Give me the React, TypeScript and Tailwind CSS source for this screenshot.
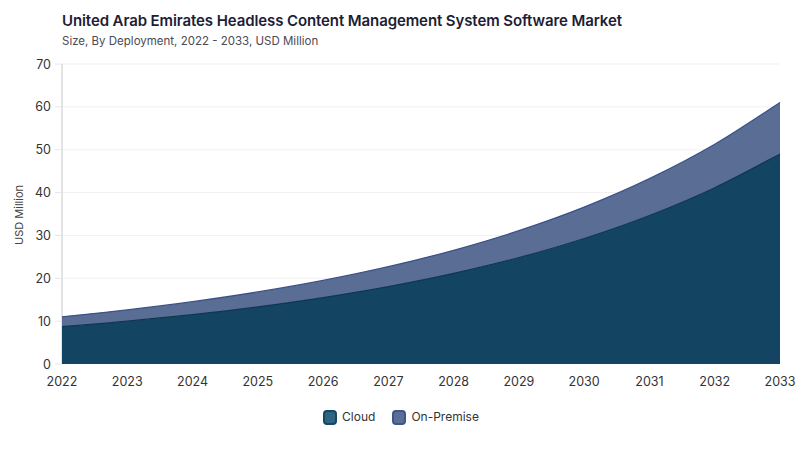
import React from 'react';

const years = [2022, 2023, 2024, 2025, 2026, 2027, 2028, 2029, 2030, 2031, 2032, 2033];
const cloud = [8.7, 9.99, 11.53, 13.34, 15.5, 18.07, 21.15, 24.84, 29.29, 34.65, 41.14, 49.0];
const total = [11.0, 12.63, 14.54, 16.81, 19.5, 22.7, 26.53, 31.11, 36.61, 43.25, 51.27, 61.0];

const X0 = 62;
const X1 = 780;
const Y0 = 371;
const YTOP = 71;
const xAt = (i: number) => X0 + ((X1 - X0) * i) / (years.length - 1);
const yAt = (v: number) => Y0 - ((Y0 - YTOP) * v) / 70;

// catmull-rom through the points, returned as bezier segments
function smooth(vals: number[]) {
  const pts = vals.map((v, i) => [xAt(i), yAt(v)]);
  let d = `M${pts[0][0]},${pts[0][1]}`;
  for (let i = 0; i < pts.length - 1; i++) {
    const p0 = pts[i - 1] || pts[i];
    const p1 = pts[i];
    const p2 = pts[i + 1];
    const p3 = pts[i + 2] || p2;
    const c1x = p1[0] + (p2[0] - p0[0]) / 6;
    const c1y = p1[1] + (p2[1] - p0[1]) / 6;
    const c2x = p2[0] - (p3[0] - p1[0]) / 6;
    const c2y = p2[1] - (p3[1] - p1[1]) / 6;
    d += ` C${c1x},${c1y} ${c2x},${c2y} ${p2[0]},${p2[1]}`;
  }
  return d;
}

function reversePath(vals: number[]) {
  const rev = [...vals].reverse();
  const pts = rev.map((v, k) => [xAt(vals.length - 1 - k), yAt(v)]);
  let d = '';
  for (let i = 0; i < pts.length - 1; i++) {
    const p0 = pts[i - 1] || pts[i];
    const p1 = pts[i];
    const p2 = pts[i + 1];
    const p3 = pts[i + 2] || p2;
    const c1x = p1[0] + (p2[0] - p0[0]) / 6;
    const c1y = p1[1] + (p2[1] - p0[1]) / 6;
    const c2x = p2[0] - (p3[0] - p1[0]) / 6;
    const c2y = p2[1] - (p3[1] - p1[1]) / 6;
    d += ` C${c1x},${c1y} ${c2x},${c2y} ${p2[0]},${p2[1]}`;
  }
  return d;
}

export default function App() {
  const topLine = smooth(total);
  const cloudLine = smooth(cloud);
  const premArea = `${topLine} L${xAt(11)},${yAt(cloud[11])}${reversePath(cloud)} Z`;
  const cloudArea = `${cloudLine} L${X1},${Y0} L${X0},${Y0} Z`;

  return (
    <div className="w-[800px] h-[450px] bg-white overflow-hidden" style={{ fontFamily: 'Inter, "Noto Sans", sans-serif' }}>
      <div className="pl-[62px] pt-[11px]">
        <h1 className="text-[15px] leading-[20px] font-semibold text-[#1d1d35] tracking-[-0.1px]">
          United Arab Emirates Headless Content Management System Software Market
        </h1>
        <p className="text-[11.5px] leading-[16px] text-[#4a4a55] mt-[2px]">
          Size, By Deployment, 2022 - 2033, USD Million
        </p>
      </div>

      <svg width="800" height="350" viewBox="0 56 800 350" className="block">
        {[10, 20, 30, 40, 50, 60, 70].map((v) => (
          <line key={v} x1={X0} x2={X1} y1={yAt(v)} y2={yAt(v)} stroke="#f1f1f1" strokeWidth="1" />
        ))}
        {[0, 10, 20, 30, 40, 50, 60, 70].map((v) => (
          <g key={v}>
            <line x1={55} x2={X0} y1={yAt(v)} y2={yAt(v)} stroke="#e6e6e6" strokeWidth="1" />
            <text x={51} y={yAt(v) + 4.5} textAnchor="end" fontSize="12.5" fill="#333">
              {v}
            </text>
          </g>
        ))}
        <line x1={X0} x2={X0} y1={YTOP} y2={Y0} stroke="#e3e3e3" strokeWidth="2" />
        <text
          x={0}
          y={0}
          transform={`translate(23,222) rotate(-90)`}
          textAnchor="middle"
          fontSize="11"
          fill="#444"
        >
          USD Million
        </text>

        <path d={premArea} fill="#5a6e95" />
        <path d={cloudArea} fill="#134562" />
        <path d={topLine} fill="none" stroke="#3b5288" strokeWidth="1.3" />
        <path d={cloudLine} fill="none" stroke="#0e3650" strokeWidth="1.2" />

        {years.map((y, i) => (
          <text key={y} x={xAt(i)} y={393} textAnchor="middle" fontSize="12.5" fill="#333">
            {y}
          </text>
        ))}
      </svg>

      <div className="flex justify-center items-center gap-[17px] mt-[9px] text-[12px] text-[#333] pl-[2px]">
        <div className="flex items-center gap-[5px]">
          <span className="w-[14px] h-[15px] rounded-[4px] bg-[#2f6580] border-2 border-[#154863]" />
          <span>Cloud</span>
        </div>
        <div className="flex items-center gap-[5px]">
          <span className="w-[14px] h-[15px] rounded-[4px] bg-[#5a6e96] border-2 border-[#3f5585]" />
          <span>On-Premise</span>
        </div>
      </div>
    </div>
  );
}
